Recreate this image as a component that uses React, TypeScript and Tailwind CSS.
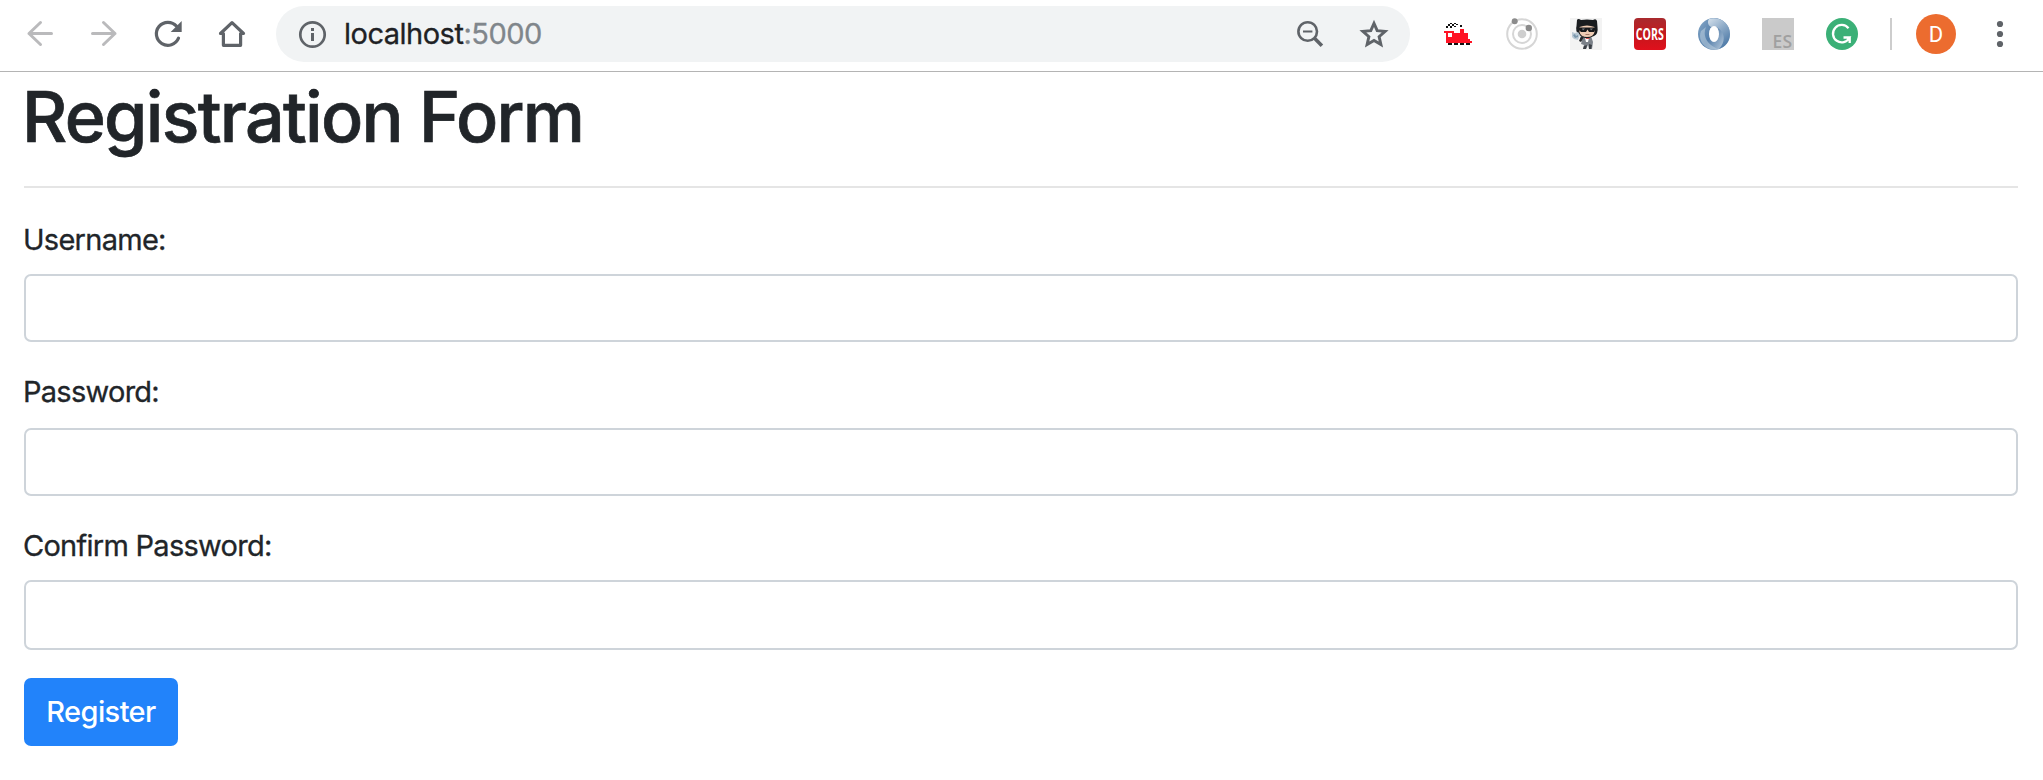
import type { ReactNode } from 'react'

const FIELDS = [
  { id: 'username', label: 'Username:', type: 'text', labelClass: 'h-[68px] pt-[15px]', inputClass: 'h-[68px]' },
  { id: 'password', label: 'Password:', type: 'password', labelClass: 'h-[86px] pt-[31px]', inputClass: 'h-[68px]' },
  { id: 'confirm', label: 'Confirm Password:', type: 'password', labelClass: 'h-[84px] pt-[31px]', inputClass: 'h-[70px]' },
]

function IconButton({ label, children }: { label: string; children: ReactNode }) {
  return (
    <button aria-label={label} className="flex w-8 h-8 shrink-0 items-center justify-center">
      {children}
    </button>
  )
}

function BackIcon() {
  return (
    <svg className="w-8 h-8" viewBox="0 0 32 32" fill="none" stroke="#bababc" strokeWidth="3" strokeLinecap="round" strokeLinejoin="round">
      <path d="M27.500 15.500H5M16.500 4.500l-11.500 11 11.500 11" />
    </svg>
  )
}

function ForwardIcon() {
  return (
    <svg className="w-8 h-8" viewBox="0 0 32 32" fill="none" stroke="#bababc" strokeWidth="3" strokeLinecap="round" strokeLinejoin="round">
      <path d="M4.500 15.500H27M15.500 4.500l11.500 11-11.500 11" />
    </svg>
  )
}

function ReloadIcon() {
  return (
    <svg className="w-8 h-8" viewBox="0 0 32 32" fill="none">
      <path d="M26.500 20.200A11.500 11.500 0 1 1 24.600 8.300" stroke="#5f6368" strokeWidth="3.200" strokeLinecap="round" />
      <path d="M29.700 3v11H18.700z" fill="#5f6368" />
    </svg>
  )
}

function HomeIcon() {
  return (
    <svg className="w-8 h-8" viewBox="0 0 32 32" fill="none" stroke="#5f6368" strokeWidth="3.200" strokeLinejoin="round" strokeLinecap="round">
      <path d="M4.500 15.500 16 4.600l11.500 10.900H24.600V27.300H7.400V15.500z" />
    </svg>
  )
}

function InfoIcon() {
  return (
    <svg className="w-8 h-8 shrink-0" viewBox="0 0 32 32" fill="none">
      <circle cx="16.500" cy="16.500" r="12.200" stroke="#5f6368" strokeWidth="2.700" />
      <path d="M15 10h3v3h-3zM15 15h3v8h-3z" fill="#5f6368" />
    </svg>
  )
}

function ZoomOutIcon() {
  return (
    <svg className="w-8 h-8" viewBox="0 0 32 32" fill="none" stroke="#5f6368">
      <circle cx="13.700" cy="13.500" r="9.300" strokeWidth="2.600" />
      <path d="M9 13.500h9.400" strokeWidth="2" />
      <path d="m20.300 20.100 7.600 7.600" strokeWidth="3.600" />
    </svg>
  )
}

function StarIcon() {
  return (
    <svg className="w-8 h-8" viewBox="0 0 32 32" fill="none">
      <path d="m16 5.400 3.200 7.300 7.900.700-6 5.300 1.800 7.800-6.900-4.100-6.900 4.100 1.800-7.800-6-5.300 7.900-.700z" stroke="#5f6368" strokeWidth="2.900" />
    </svg>
  )
}

function TrainIcon() {
  return (
    <svg className="w-8 h-8" viewBox="0 0 32 32" shapeRendering="crispEdges">
      <path fill="#ff1425" fillRule="evenodd" d="M2 13h10v2h6v-4h4v4h4v6h2v2h2v2H4V15H2zM6 15v4h4v-4z" />
      <path fill="#111" d="M6 25h4v2H6zM12 25h4v2h-4zM18 25h4v2h-4zM24 25h4v2h-4zM4 8h2v2H4zM6 6h2v2H6zM8 8h2v2H8zM8 5h2v1H8zM10 6h2v2h-2zM12 5h2v1h-2zM12 8h2v1h-2zM14 6h2v1h-2zM18 7h2v2h-2z" />
    </svg>
  )
}

function OrbitIcon() {
  return (
    <svg className="w-8 h-8" viewBox="0 0 32 32" fill="none">
      <circle cx="16" cy="16" r="14.800" stroke="#d6d6d6" strokeWidth="2" />
      <circle cx="16" cy="16" r="9" stroke="#d6d6d6" strokeWidth="2" />
      <circle cx="16" cy="16" r="4.300" fill="#cfcfcf" />
      <circle cx="8.700" cy="3.300" r="3" fill="#8b8b8b" />
      <circle cx="22.800" cy="10" r="3.200" fill="#8b8b8b" />
    </svg>
  )
}

function AgentIcon() {
  return (
    <svg className="w-8 h-8" viewBox="0 0 32 32">
      <path fill="#f3f3f3" d="M0 0h32v32H0z" />
      {/* suit */}
      <path fill="#7b8189" d="m13 19 8-1 2 6-1 7h-3l-1-4-2 4h-3l1-4-3-1z" />
      <path fill="#3a3f45" d="m14 28 3-1-1 4h-3zM19 26l3 1-1 4h-2z" />
      <path fill="#fff" d="M15 20h4l-1 4h-2z" />
      <path fill="#d05050" d="M15 19h5l-1 2h-3z" />
      {/* head */}
      <path fill="#191c1f" d="M7 2q1-2 4 0 6-1 12 0 3-2 4 1l.5 6q1 7-3.500 9l-5 2h-4l-6-3Q5 13 6.500 8z" />
      <path fill="#efccb4" d="M9.500 9q7.500-3 15 0v5q-1 5-7.500 5T9.500 14z" />
      <path fill="#17191c" d="M9 9.500h16V12l-1 2h-5l-1.500-2.500L16 14h-5l-2-2z" />
      <path fill="#777c82" d="M12 10.500h3l-2 2zM20 10.500h3l-2 2z" />
      <path fill="#a17868" d="M15.500 16h4v1h-4z" />
      {/* bubble */}
      <path fill="#b9c8d4" d="m2 14 3 1 3-1 2 3-2 5-4-1-2-2z" />
      <path fill="#7895ab" d="m3 17 2-1 1 2 2-1v2l-3 1z" />
      <path fill="#26292d" d="m11 18 3 1-3 5-2-1z" />
    </svg>
  )
}

function CorsIcon() {
  return (
    <div className="flex w-8 h-8 items-center justify-center rounded-[4px] bg-linear-to-b from-[#a82a2e] via-[#c4161c] to-[#e0101c]">
      <span className="scale-x-[0.64] font-['Open_Sans',sans-serif] text-[16.5px] leading-none font-bold text-white">CORS</span>
    </div>
  )
}

function SwirlIcon() {
  return (
    <svg className="w-8 h-8" viewBox="0 0 32 32">
      <defs>
        <linearGradient id="ringBase" x1="0" y1="0.200" x2="1" y2="0.800">
          <stop offset="0" stopColor="#7fa2c4" />
          <stop offset="0.450" stopColor="#557fab" />
          <stop offset="1" stopColor="#c3d3e2" />
        </linearGradient>
        <linearGradient id="ringFold" x1="0" y1="0" x2="0.600" y2="1">
          <stop offset="0" stopColor="#d5e1ec" />
          <stop offset="0.500" stopColor="#8eabc8" />
          <stop offset="1" stopColor="#4f7ba8" />
        </linearGradient>
      </defs>
      <path fill="url(#ringBase)" d="M16 0a16 16 0 1 0 0 32a16 16 0 1 0 0-32z" />
      <path fill="url(#ringFold)" d="M11 1C20-2 32 4 32 16c0 8-5 13-11 15 5-5 6-12 3-17-3-5-7-6-11-5-3-2-4-5-2-8z" />
      <path fill="#b8cbdc" opacity="0.600" d="M8 9c-3 7-1 15 8 20 2 1 3 2 5 2C8 34-1 23 3 13z" />
      <ellipse cx="16" cy="16" rx="5" ry="8" fill="#fff" />
    </svg>
  )
}

function EsIcon() {
  return (
    <div className="flex w-8 h-8 items-end justify-end bg-[#cacaca] pr-[2px] pb-px">
      <span className="font-['Open_Sans',sans-serif] text-[17.5px] leading-[16px] font-semibold text-[#a0a0a0]">ES</span>
    </div>
  )
}

function GrammarIcon() {
  return (
    <svg className="w-8 h-8" viewBox="0 0 32 32" fill="none">
      <circle cx="16" cy="16" r="16" fill="#3bb077" />
      <path d="M22.500 10.200A8.700 8.700 0 1 0 23.500 19.500H17.500M23.700 25V19.500" stroke="#fff" strokeWidth="2.300" />
    </svg>
  )
}

function Toolbar() {
  return (
    <header className="flex h-[72px] items-center border-b border-[#b4b4b4] pl-6 pr-[27px] pb-[3px]">
      <nav className="flex gap-8">
        <IconButton label="Back"><BackIcon /></IconButton>
        <IconButton label="Forward"><ForwardIcon /></IconButton>
        <IconButton label="Reload"><ReloadIcon /></IconButton>
        <IconButton label="Home"><HomeIcon /></IconButton>
      </nav>

      <div className="ml-7 flex h-14 w-[1134px] items-center rounded-full bg-[#f1f3f4] pl-5 pr-5">
        <InfoIcon />
        <div className="ml-4 flex-1 text-[29px] tracking-[-0.5px] text-[#202124] [-webkit-text-stroke:0.3px]">
          localhost<span className="text-[#80868b]">:5000</span>
        </div>
        <div className="flex gap-8">
          <IconButton label="Zoom out"><ZoomOutIcon /></IconButton>
          <IconButton label="Bookmark"><StarIcon /></IconButton>
        </div>
      </div>

      <div className="ml-8 flex gap-8">
        <TrainIcon />
        <OrbitIcon />
        <AgentIcon />
        <CorsIcon />
        <SwirlIcon />
        <EsIcon />
        <GrammarIcon />
      </div>

      <div className="ml-8 h-8 w-[2px] bg-[#cdcdcd]" />
      <div className="ml-6 flex size-10 items-center justify-center rounded-full bg-[#ec6c2f] font-[Roboto,sans-serif] text-[22px] text-white">
        D
      </div>
      <svg className="ml-7 w-8 h-8" viewBox="0 0 32 32" fill="#5f6368">
        <circle cx="16" cy="6" r="3.100" />
        <circle cx="16" cy="16" r="3.100" />
        <circle cx="16" cy="26" r="3.100" />
      </svg>
    </header>
  )
}

export default function App() {
  return (
    <div className="h-[780px] w-[2043px] overflow-hidden bg-white font-[Inter,sans-serif] text-[#212529]">
      <Toolbar />
      <main className="pl-6 pr-[25px]">
        <h1 className="-ml-[2px] flex h-[114px] items-start pt-[2px] text-[70px] leading-[86px] font-medium tracking-[-1.700px] [-webkit-text-stroke:0.7px]">
          Registration Form
        </h1>
        <hr className="border-t-2 border-[#e5e5e5]" />
        <form className="flex flex-col items-start pt-[18px]">
          {FIELDS.map((field) => (
            <div key={field.id} className="w-full">
              <label htmlFor={field.id} className={`-ml-px block text-[29px] leading-[37px] tracking-[-0.730px] [-webkit-text-stroke:0.3px] ${field.labelClass}`}>
                {field.label}
              </label>
              <input
                id={field.id}
                type={field.type}
                className={`block w-full rounded-[7px] border-2 border-[#ced4da] bg-white ${field.inputClass}`}
              />
            </div>
          ))}
          <button type="button" className="mt-7 flex h-[68px] w-[154px] items-center justify-center rounded-[7px] bg-[#2283fa] text-[29px] font-[460] tracking-[-0.600px] text-white">
            Register
          </button>
        </form>
      </main>
    </div>
  )
}
